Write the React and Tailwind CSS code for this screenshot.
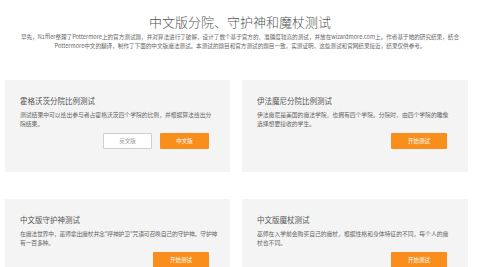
import React from "react";

const cards = [
  {
    title: "霍格沃茨分院比例测试",
    lines: ["测试结果中可以给出参与者占霍格沃茨四个学院的比例，并根据算法给出分", "院结果。"],
    buttons: [
      { label: "英文版", kind: "white" },
      { label: "中文版", kind: "orange" },
    ],
  },
  {
    title: "伊法魔尼分院比例测试",
    lines: ["伊法魔尼是美国的魔法学院，也拥有四个学院。分院时，由四个学院的雕像", "选择想要接收的学生。"],
    buttons: [{ label: "开始测试", kind: "orange", wide: true }],
  },
  {
    title: "中文版守护神测试",
    lines: ["在魔法世界中，巫师拿出魔杖并念\"呼神护卫\"咒语可召唤自己的守护神。守护神", "有一百多种。"],
    tight: true,
    buttons: [{ label: "开始测试", kind: "orange", wide: true }],
  },
  {
    title: "中文版魔杖测试",
    lines: ["巫师在入学前会购买自己的魔杖，根据性格和身体特征的不同，每个人的魔", "杖也不同。"],
    buttons: [{ label: "开始测试", kind: "orange", wide: true }],
  },
];

function Card({ title, lines, buttons, tight }) {
  return (
    <div className="bg-[#f4f4f4] h-[92px] px-[15px] pt-[16px]">
      <div className="text-[7.5px] leading-[10px] text-[#555]">{title}</div>
      <div className="mt-[5px] text-[5.8px] leading-[8.5px] text-[#666] h-[17px]">
        {lines.map((l, i) => (
          <div key={i} className={`whitespace-nowrap ${tight ? "tracking-[-0.15px]" : ""}`}>
            {l}
          </div>
        ))}
      </div>
      <div className="mt-[5px] flex justify-end gap-[8px] mr-[6px]">
        {buttons.map((b, i) =>
          b.kind === "white" ? (
            <div
              key={i}
              className="w-[49px] h-[16px] bg-white border border-[#cfcfcf] rounded-[1px] flex items-center justify-center text-[5.5px] text-[#999]"
            >
              {b.label}
            </div>
          ) : (
            <div
              key={i}
              className={`${b.wide ? "w-[56px]" : "w-[49px]"} h-[16px] bg-[#f98e1d] rounded-[1px] flex items-center justify-center text-[5.5px] text-white`}
            >
              {b.label}
            </div>
          )
        )}
      </div>
    </div>
  );
}

export default function App() {
  return (
    <div className="w-[480px] h-[267px] overflow-hidden bg-white font-['Noto_Sans_CJK_SC','Noto_Sans',sans-serif]">
      <div className="pt-[15px] text-center">
        <h1 className="text-[13px] leading-[14px] text-[#555] font-light">中文版分院、守护神和魔杖测试</h1>
        <p className="mt-[4px] text-[5.6px] leading-[9px] text-[#666]">
          早先，N1ffler整理了Pottermore上的官方测试题，并对算法进行了破解，设计了数个基于官方的、准确度较高的测试，并放在wizardmore.com上。作者基于她的研究结果，结合
          <br />
          Pottermore中文的翻译，制作了下面的中文版魔法测试。本测试的题目和官方测试的题目一致，实测证明，这些测试和官网结果接近，结果仅供参考。
        </p>
      </div>
      <div className="mt-[29px] pl-[5px] grid grid-cols-[225px_226px] gap-x-[12px] gap-y-[27px]">
        {cards.map((c, i) => (
          <Card key={i} {...c} />
        ))}
      </div>
    </div>
  );
}
